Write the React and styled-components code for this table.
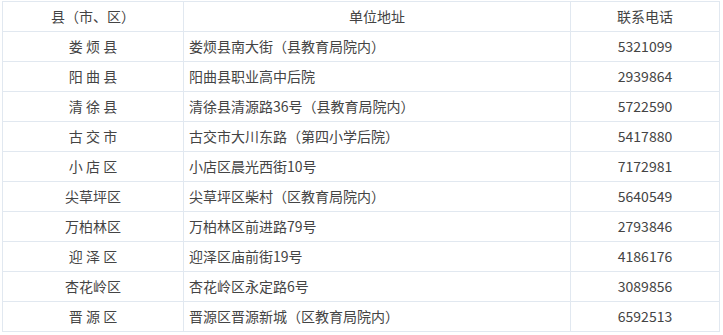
import styled, { createGlobalStyle } from 'styled-components';

const rows = [
  ['娄 烦 县', '娄烦县南大街（县教育局院内）', '5321099'],
  ['阳 曲 县', '阳曲县职业高中后院', '2939864'],
  ['清 徐 县', '清徐县清源路36号（县教育局院内）', '5722590'],
  ['古 交 市', '古交市大川东路（第四小学后院）', '5417880'],
  ['小 店 区', '小店区晨光西街10号', '7172981'],
  ['尖草坪区', '尖草坪区柴村（区教育局院内）', '5640549'],
  ['万柏林区', '万柏林区前进路79号', '2793846'],
  ['迎 泽 区', '迎泽区庙前街19号', '4186176'],
  ['杏花岭区', '杏花岭区永定路6号', '3089856'],
  ['晋 源 区', '晋源区晋源新城（区教育局院内）', '6592513'],
];

const GlobalStyle = createGlobalStyle`
  body {
    margin: 0;
    background: #fff;
    font-family: "Noto Sans CJK SC", "Liberation Sans", sans-serif;
  }
`;

const Wrap = styled.div`
  padding: 1px 0 0 2px;
`;

const Table = styled.table`
  width: 718px;
  border-collapse: collapse;
  table-layout: fixed;
  font-size: 14px;
  color: #444;
`;

const Cell = styled.td`
  height: 29px;
  padding: 0 0 0 ${({ left }) => (left ? '5px' : '0')};
  border: 1px solid #e1e8f0;
  text-align: ${({ left }) => (left ? 'left' : 'center')};
  white-space: pre;
  line-height: 29px;
`;

const Head = styled(Cell).attrs({ as: 'th' })`
  font-weight: normal;
  text-align: center;
  padding: 0;
`;

export default function App() {
  return (
    <Wrap>
      <GlobalStyle />
      <Table>
        <colgroup>
          <col style={{ width: 181 }} />
          <col style={{ width: 387 }} />
          <col />
        </colgroup>
        <thead>
          <tr>
            <Head>县（市、区）</Head>
            <Head>单位地址</Head>
            <Head>联系电话</Head>
          </tr>
        </thead>
        <tbody>
          {rows.map(([name, addr, tel]) => (
            <tr key={tel}>
              <Cell>{name}</Cell>
              <Cell left>{addr}</Cell>
              <Cell>{tel}</Cell>
            </tr>
          ))}
        </tbody>
      </Table>
    </Wrap>
  );
}
